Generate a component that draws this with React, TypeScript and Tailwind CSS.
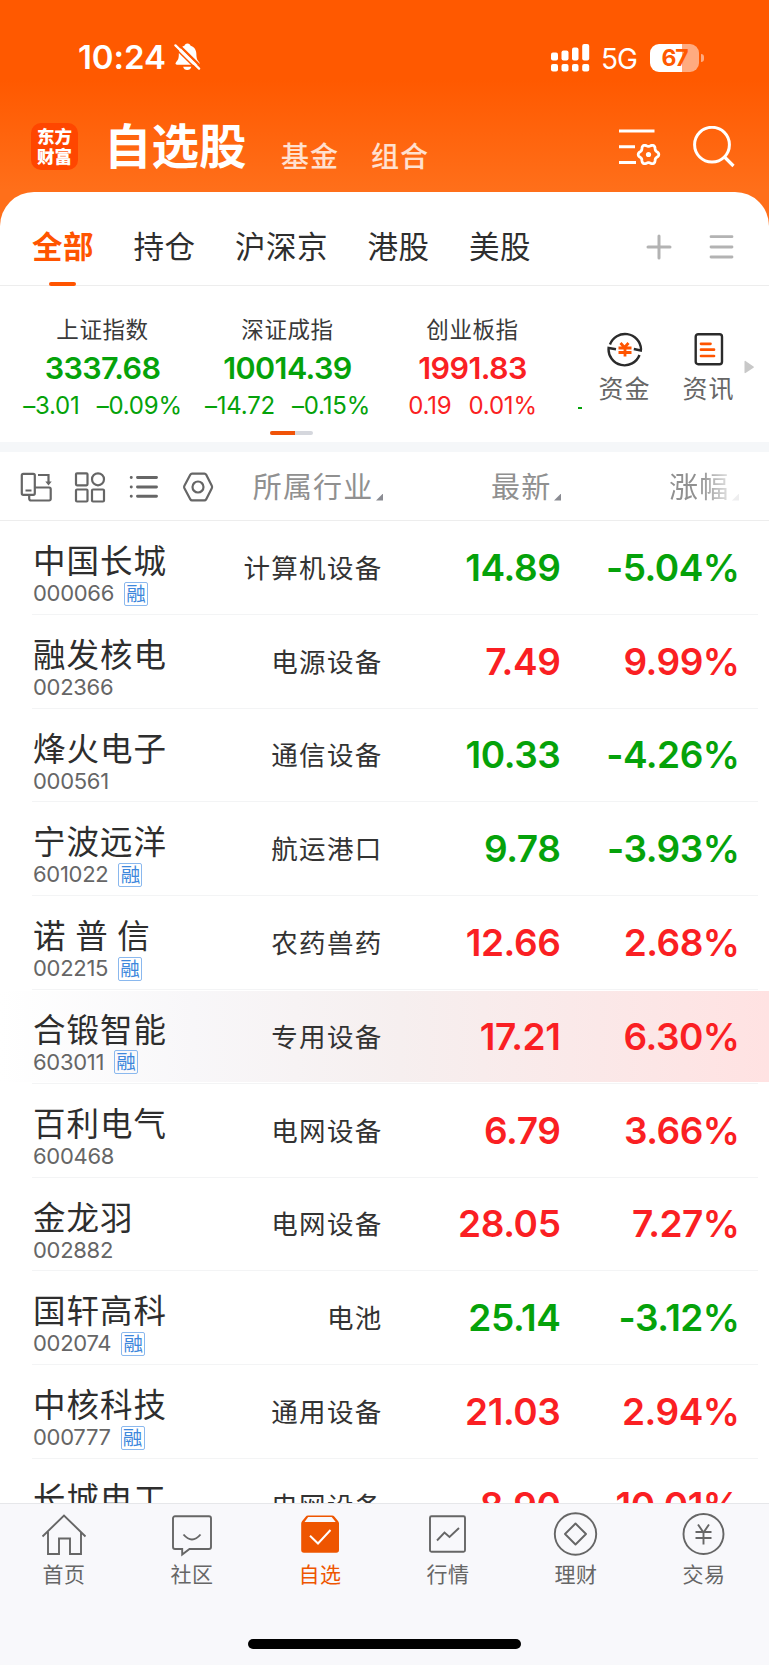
import React from "react";

type Trend = "up" | "down";

interface Stock {
  name: string;
  code: string;
  margin?: boolean;
  industry: string;
  price: string;
  change: string;
  trend: Trend;
  active?: boolean;
}

const trendColor: Record<Trend, string> = {
  up: "text-[#fa1f23]",
  down: "text-[#05a20a]",
};

const stocks: Stock[] = [
  { name: "中国长城", code: "000066", margin: true, industry: "计算机设备", price: "14.89", change: "-5.04%", trend: "down" },
  { name: "融发核电", code: "002366", industry: "电源设备", price: "7.49", change: "9.99%", trend: "up" },
  { name: "烽火电子", code: "000561", industry: "通信设备", price: "10.33", change: "-4.26%", trend: "down" },
  { name: "宁波远洋", code: "601022", margin: true, industry: "航运港口", price: "9.78", change: "-3.93%", trend: "down" },
  { name: "诺 普 信", code: "002215", margin: true, industry: "农药兽药", price: "12.66", change: "2.68%", trend: "up" },
  { name: "合锻智能", code: "603011", margin: true, industry: "专用设备", price: "17.21", change: "6.30%", trend: "up", active: true },
  { name: "百利电气", code: "600468", industry: "电网设备", price: "6.79", change: "3.66%", trend: "up" },
  { name: "金龙羽", code: "002882", industry: "电网设备", price: "28.05", change: "7.27%", trend: "up" },
  { name: "国轩高科", code: "002074", margin: true, industry: "电池", price: "25.14", change: "-3.12%", trend: "down" },
  { name: "中核科技", code: "000777", margin: true, industry: "通用设备", price: "21.03", change: "2.94%", trend: "up" },
  { name: "长城电工", code: "600192", industry: "电网设备", price: "8.90", change: "10.01%", trend: "up" },
];

const indices: { name: string; value: string; diff: string; pct: string; trend: Trend }[] = [
  { name: "上证指数", value: "3337.68", diff: "–3.01", pct: "–0.09%", trend: "down" },
  { name: "深证成指", value: "10014.39", diff: "–14.72", pct: "–0.15%", trend: "down" },
  { name: "创业板指", value: "1991.83", diff: "0.19", pct: "0.01%", trend: "up" },
];

// six-lobed outline for the small settings gear
const gearPoints = Array.from({ length: 72 }, (_, i) => {
  const a = (i / 72) * Math.PI * 2;
  const r = 9.2 + 1.1 * Math.cos(6 * a);
  return `${(29.5 + r * Math.cos(a)).toFixed(2)},${(26.5 + r * Math.sin(a)).toFixed(2)}`;
}).join(" ");

const StatusBar: React.FC = () => (
  <div className="flex h-[114px] items-start justify-between pl-[78px] pr-[65px] pt-[42px]">
    <div className="flex items-center gap-[8px]">
      <span className="text-[33px] font-semibold leading-[30px] tracking-[-0.1px]">10:24</span>
      <svg width="27" height="30" viewBox="0 0 28 30" fill="none">
        <path
          d="M14 1c1.8 0 3 1 3.2 2.4 4 1.2 5.9 4.5 6 8.6.1 5 1 6.5 3 8.7.9 1 .5 2.3-1 2.3H3.3c-1.7 0-2.2-1.3-1.3-2.3 2-2.2 3-3.7 3-8.7.1-4 1.9-7.3 5.8-8.6C11.100 2 12.200 1 14 1Z"
          fill="white"
        />
        <path d="M9.500 25h8.500c-.4 2-2.100 3.500-4.300 3.500S9.900 27 9.500 25Z" fill="white" />
        <path d="M3.500 1 28.500 25.500" stroke="#ff5900" strokeWidth="2.500" />
        <path d="M1.500 3 26 27" stroke="white" strokeWidth="2.400" strokeLinecap="round" />
        <path d="M-1 4 24 28.500" stroke="#ff5900" strokeWidth="1.500" />
      </svg>
    </div>
    <div className="flex items-center">
      <svg width="39" height="28" viewBox="0 0 39 28" fill="white">
        <rect x="0" y="8.500" width="7" height="8" rx="2" />
        <rect x="10.500" y="6.500" width="7" height="10" rx="2" />
        <rect x="21" y="3.500" width="6.500" height="13" rx="2" />
        <rect x="31.200" y="0" width="7" height="16.500" rx="2" />
        <rect x="0" y="20" width="7" height="7.500" rx="2" />
        <rect x="10.500" y="20" width="7" height="7.500" rx="2" />
        <rect x="21" y="20" width="6.500" height="7.500" rx="2" />
        <rect x="31.200" y="20" width="7" height="7.500" rx="2" />
      </svg>
      <span className="ml-[11px] mt-[3px] w-[37px] text-[28px] leading-[28px] tracking-[-1px]">5G</span>
      <div className="ml-[12px] flex h-[28px] w-[49px] items-center justify-center rounded-[9px] bg-[linear-gradient(90deg,#fff_66%,#ffab80_66%)]">
        <span className="text-[23px] font-bold leading-[28px] tracking-[-1.2px] text-[#ff5900]">67</span>
      </div>
      <span className="ml-[2px] h-[8px] w-[3px] rounded-r-full bg-[#ffab80]" />
    </div>
  </div>
);

const TitleBar: React.FC = () => (
  <div className="flex h-[78px] items-start pl-[31px] pr-[34px]">
    <div className="mt-[9px] flex h-[47px] w-[47px] flex-col items-center justify-center rounded-[10px] bg-[#ff4600] text-[17.5px] font-black leading-[19.5px]">
      <span>东方</span>
      <span>财富</span>
    </div>
    <h1 className="ml-[26px] w-[144px] whitespace-nowrap text-[47.5px] font-bold leading-[66px]">自选股</h1>
    <span className="ml-[33px] mt-[23px] text-[28px] font-medium leading-[40px] tracking-[1px] text-white/80">基金</span>
    <span className="ml-[32px] mt-[23px] text-[28px] font-medium leading-[40px] tracking-[1px] text-white/80">组合</span>
    <svg className="ml-auto mt-[14px]" width="42" height="40" viewBox="0 0 42 40" fill="none" stroke="white" strokeWidth="3">
      <path d="M0 3h35.500M0 18.700h16M0 34.500h17" />
      <polygon points={gearPoints} strokeWidth="2.800" strokeLinejoin="round" />
      <circle cx="29.500" cy="26.500" r="2.600" fill="white" stroke="none" />
    </svg>
    <svg className="ml-[32px] mt-[12px]" width="42" height="42" viewBox="0 0 42 42" fill="none" stroke="white" strokeWidth="3">
      <circle cx="19" cy="18.700" r="17.400" />
      <path d="m31 30.500 9.500 9.500" strokeWidth="3.200" />
    </svg>
  </div>
);

const MarketTabs: React.FC = () => (
  <nav className="flex h-[94px] items-start border-b border-[#ededed] pl-[32px] text-[30.5px] leading-[42px] tracking-[0.5px] text-[#2e2e2e]">
    <div className="flex h-[94px] gap-[39.500px] pt-[34px]">
      <div className="flex flex-col items-center justify-between">
        <span className="font-bold text-[#ff5400]">全部</span>
        <span className="mr-[1px] h-[4px] w-[27px] rounded-full bg-[#ff5400]" />
      </div>
      <span>持仓</span>
      <span>沪深京</span>
      <span>港股</span>
      <span>美股</span>
    </div>
    <svg className="ml-auto mt-[42px]" width="26" height="26" viewBox="0 0 26 26" stroke="#b3b3b3" strokeWidth="3" strokeLinecap="round">
      <path d="M13 2v22M2 13h22" />
    </svg>
    <svg className="ml-[37px] mr-[35px] mt-[42px]" width="25" height="26" viewBox="0 0 25 26" stroke="#b3b3b3" strokeWidth="2.800" strokeLinecap="round">
      <path d="M2 2.700h21M2 13h21M2 23h21" />
    </svg>
  </nav>
);

const IndexStrip: React.FC = () => (
  <section className="flex h-[156px] items-start">
    <div className="flex w-[583px] flex-col items-center">
      <div className="flex w-full items-start overflow-hidden whitespace-nowrap pl-[10px] pt-[27px]">
        {indices.map((item) => (
          <div key={item.name} className="flex w-[185px] shrink-0 flex-col items-center">
            <span className="text-[22.500px] leading-[34px] tracking-[0.600px] text-[#3a3a3a]">{item.name}</span>
            <span className={`text-[30.5px] font-semibold leading-[42px] tracking-[-0.600px] ${trendColor[item.trend]}`}>{item.value}</span>
            <span className={`flex gap-[17px] text-[24px] leading-[34px] tracking-[-0.200px] ${trendColor[item.trend]}`}>
              <span>{item.diff}</span>
              <span>{item.pct}</span>
            </span>
          </div>
        ))}
        <span className="ml-[13px] mt-[94px] h-[2px] w-[4px] bg-[#05a20a]" />
      </div>
      <div className="mt-[8px] flex h-[4px] w-[43px] overflow-hidden rounded-full bg-[#d5d7dd]">
        <span className="w-[25px] bg-[#f05308]" />
      </div>
    </div>
    <div className="flex flex-1 items-start pt-[45px] text-[25px] leading-[36px] tracking-[1px] text-[#666]">
      <div className="ml-[15px] flex w-[53px] flex-col items-center">
        <svg width="36" height="36" viewBox="0 0 36 36" fill="none" stroke="#2b2b2b" strokeWidth="2.400">
          <path d="M3 13.500A16 16 0 0 1 34 18l-.2 1.500-7-1.500" />
          <path d="M32.500 24A16 16 0 0 1 1.600 17l7.400 1.300" />
          <path d="m13.500 12 4 4.500 4-4.500M11.500 17h13M11.500 21.500h13M18 16v9.500" stroke="#ff5400" strokeWidth="2.800" />
        </svg>
        <span className="mt-[4px]">资金</span>
      </div>
      <div className="ml-[31px] flex w-[53px] flex-col items-center">
        <svg width="30" height="36" viewBox="0 0 30 36" fill="none" stroke="#2b2b2b" strokeWidth="2.400">
          <rect x="1.700" y="3.200" width="26.300" height="30" rx="2.500" />
          <path d="M7 12.800h9.500M7 18.700h13M7 25h13" stroke="#ff5400" strokeWidth="2.700" strokeLinecap="round" />
        </svg>
        <span className="mt-[4px]">资讯</span>
      </div>
      <svg className="ml-[9px] mt-[29px]" width="11" height="14" viewBox="0 0 11 14" fill="#c8c8c8">
        <path d="M.5 1.500v11c0 .6.5.8 1 .5L9.500 7.700c.5-.4.5-.9 0-1.200L1.500.9C1 .6.5.9.5 1.500Z" />
      </svg>
    </div>
  </section>
);

const SortLabel: React.FC<{ label: string; className?: string }> = ({ label, className = "" }) => (
  <div className={`flex items-end justify-end text-[#909090] ${className}`}>
    <span>{label}</span>
    <svg className="mb-[8px] ml-[2px]" width="7.500" height="7.500" viewBox="0 0 8 8" fill="#8a8b92">
      <path d="M8 0v8H0Z" />
    </svg>
  </div>
);

const ListHeader: React.FC = () => (
  <div className="flex h-[69px] shrink-0 items-center border-b border-[#ededed] pl-[20px] pt-[2px]">
    <div className="flex w-[194px] shrink-0 gap-[22px]">
      <svg width="32" height="32" viewBox="0 0 32 32" fill="none" stroke="#666" strokeWidth="2.200">
        <rect x="1.800" y="2.800" width="13" height="21" rx="1.500" />
        <path d="M5.500 19.500h6M9.200 24v3.500a2 2 0 0 0 2 2h18a1.500 1.500 0 0 0 1.500-1.500V18a1.500 1.500 0 0 0-1.500-1.500H15M18 4h10.500v8.500" />
        <path d="m25.300 10.500 3.200 4 3.200-4Z" fill="#666" stroke="none" />
      </svg>
      <svg width="32" height="32" viewBox="0 0 32 32" fill="none" stroke="#666" strokeWidth="2.200">
        <rect x="2" y="2.300" width="11.500" height="12" rx="1" />
        <circle cx="24" cy="8.300" r="6" />
        <rect x="2" y="18.500" width="11.500" height="12" rx="1" />
        <rect x="18" y="18.500" width="12" height="12" rx="1" />
      </svg>
      <svg width="32" height="32" viewBox="0 0 32 32" fill="none" stroke="#666" strokeWidth="2.900" strokeLinecap="round">
        <path d="M9.500 6.500h19M9.500 16h19M9.500 25.300h19M3.200 6.500h.1M3.200 16h.1M3.200 25.300h.1" />
      </svg>
      <svg width="32" height="32" viewBox="0 0 32 32" fill="none" stroke="#666" strokeWidth="2.200" strokeLinejoin="round">
        <path d="M10 2.600h12.500q1 0 1.600 1l5.700 11.200q.6 1.200 0 2.400l-5.700 11.200q-.6 1-1.600 1H10q-1 0-1.600-1L2.400 17.200q-.6-1.200 0-2.400L8.400 3.600q.6-1 1.600-1Z" />
        <circle cx="16" cy="16" r="5.500" />
      </svg>
    </div>
    <div className="grid grid-cols-[169px_178px_178px] pt-[1px] text-[29px] leading-[42px] tracking-[1.200px]">
      <SortLabel label="所属行业" />
      <SortLabel label="最新" />
      <SortLabel label="涨幅" className="[mask-image:linear-gradient(90deg,#000_78%,rgba(0,0,0,0.150)_97%)]" />
    </div>
  </div>
);

const StockRow: React.FC<{ stock: Stock }> = ({ stock }) => (
  <div className="flex h-[93.800px] shrink-0 flex-col">
    <div
      className={`mt-[1px] flex h-[90.800px] items-center pl-[33px] ${
        stock.active ? "bg-[linear-gradient(90deg,#ffffff_0%,#f8f7f9_25%,#f6efef_52%,#ffe2e2_100%)]" : ""
      }`}
    >
      <div className="flex h-full w-[170px] flex-col pt-[21px]">
        <span className="whitespace-pre text-[32.5px] leading-[38px] tracking-[1px] text-[#2e2e2e] [word-spacing:-1.5px]">{stock.name}</span>
        <div className="flex h-[25px] items-center gap-[10px]">
          <span className="text-[22px] leading-[25px] tracking-[-0.300px] text-[#666]">{stock.code}</span>
          {stock.margin && (
            <span className="flex h-[24px] w-[24px] items-center justify-center rounded-[2px] border border-[#8ab8ee] text-[19.5px] leading-[20px] text-[#3d87dc]">
              融
            </span>
          )}
        </div>
      </div>
      <span className="w-[179.500px] pt-[1px] text-right text-[26.500px] leading-[38px] tracking-[1.300px] text-[#333]">{stock.industry}</span>
      <span className={`w-[178px] pt-[1px] text-right text-[37px] font-semibold leading-[44px] tracking-[-0.4px] ${trendColor[stock.trend]}`}>{stock.price}</span>
      <span className={`w-[179px] pt-[1px] text-right text-[37px] font-semibold leading-[44px] tracking-[-0.5px] ${trendColor[stock.trend]}`}>{stock.change}</span>
    </div>
    <div className="ml-[32px] mr-[11px] mt-auto h-px bg-[#f3f4f5]" />
  </div>
);

const TabItem: React.FC<{ label: string; active?: boolean; children: React.ReactNode }> = ({ label, active, children }) => (
  <div className={`flex flex-1 flex-col items-center pt-[8px] ${active ? "text-[#ee5500]" : "text-[#666]"}`}>
    <svg width="46" height="46" viewBox="0 0 46 46" fill="none" stroke="currentColor" strokeWidth="1.900">
      {children}
    </svg>
    <span className="mt-[1px] text-[21px] leading-[32px] tracking-[0.600px]">{label}</span>
  </div>
);

const BottomTabs: React.FC = () => (
  <footer className="flex h-[162px] shrink-0 flex-col items-center border-t border-[#e6e7ea] bg-[#f8f8fb]">
    <nav className="flex w-full pr-[1px]">
      <TabItem label="首页">
        <path d="M1.500 24.500 23 3.500l21.500 21M7 20v22h11V26.500h11V42h11V20" />
      </TabItem>
      <TabItem label="社区">
        <path d="M6 4.300h34a2 2 0 0 1 2 2V35a2 2 0 0 1-2 2H20.500l-7.300 5.500V37H6a2 2 0 0 1-2-2V6.300a2 2 0 0 1 2-2Z" />
        <path d="M14.500 22.500q8.500 10 17 0" />
      </TabItem>
      <TabItem label="自选" active>
        <path d="M11 3.500h24q1.500 0 2.500 1.200l3.500 4.300q1 1.200 1 2.500V38q0 2.800-2.800 2.800H7q-2.800 0-2.800-2.800V11.500q0-1.300 1-2.500l3.500-4.300Q9.500 3.500 11 3.500Z" fill="currentColor" stroke="none" />
        <path d="M11.200 5h23.500l4 5H7.500Z" fill="#f8f8fb" stroke="none" />
        <path d="m13 23.800 8 7.700L33.500 18" stroke="#fff" strokeWidth="2" />
      </TabItem>
      <TabItem label="行情">
        <rect x="5" y="4.300" width="35" height="35.400" rx="1.500" />
        <path d="m12 28.500 7.500-8 5 4.500 9.500-9" />
      </TabItem>
      <TabItem label="理财">
        <circle cx="22.500" cy="22" r="20.700" />
        <path d="m22.500 11.500 10.500 10.500L22.500 32.500 12 22Z" strokeLinejoin="round" />
      </TabItem>
      <TabItem label="交易">
        <circle cx="22.500" cy="22" r="20" />
        <path d="m17 12.500 5.500 8 5.500-8M14.500 20h16M14.500 26h16M22.500 20v12.500" />
      </TabItem>
    </nav>
    <div className="mt-[48px] h-[10px] w-[273px] rounded-full bg-black" />
  </footer>
);

const App: React.FC = () => {
  return (
    <div className="flex h-[1665px] w-[769px] flex-col overflow-hidden bg-white [font-family:Inter,'Noto_Sans_CJK_SC',sans-serif]">
      <div className="h-[286px] shrink-0 bg-[linear-gradient(180deg,#ff5900_80px,#ff6f1a_190px)]">
        <header className="text-white">
          <StatusBar />
          <TitleBar />
        </header>
        <div className="rounded-t-[34px] bg-white">
          <MarketTabs />
        </div>
      </div>
      <IndexStrip />
      <div className="h-[10px] shrink-0 bg-[#f5f7f9]" />
      <ListHeader />
      <main className="flex min-h-0 flex-1 flex-col overflow-hidden">
        {stocks.map((stock) => (
          <StockRow key={stock.code} stock={stock} />
        ))}
      </main>
      <BottomTabs />
    </div>
  );
};

export default App;
